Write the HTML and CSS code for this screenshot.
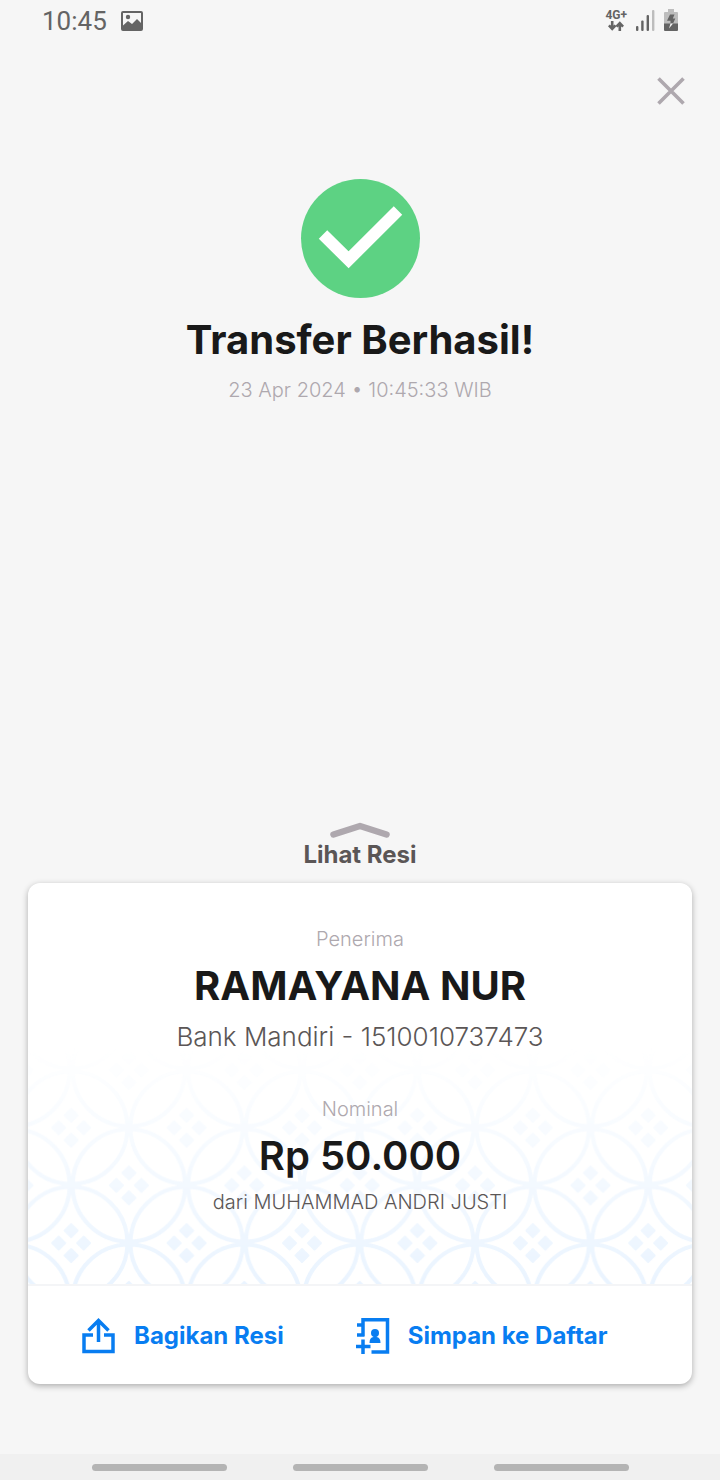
FILE: index.html
```html
<!DOCTYPE html>
<html lang="id">
<head>
<meta charset="utf-8">
<meta name="viewport" content="width=device-width, initial-scale=1">
<title>Transfer Berhasil</title>
<link rel="stylesheet" href="styles.css">
</head>
<body>
<div class="screen">
  <header class="status-bar">
    <div class="status-group">
      <span class="clock">10:45</span>
      <svg class="status-photo" viewBox="0 0 22 20" aria-hidden="true">
        <path fill="#646464" fill-rule="evenodd" d="M2 0H20Q22 0 22 2V18Q22 20 20 20H2Q0 20 0 18V2Q0 0 2 0ZM2 2V14.500L7 10L11 13L16 8L20 12V2Z"/>
        <circle cx="7" cy="6" r="2.200" fill="#646464"/>
      </svg>
    </div>
    <div class="status-group status-right">
      <div class="network">
        <span>4G+</span>
        <svg class="network-arrows" viewBox="0 0 16 10" aria-hidden="true">
          <path fill="none" stroke="#646464" stroke-width="2.600" d="M4.200 0V7.500M0.900 4.300L4.200 7.800L7.500 4.300M11.800 10V2.500M8.500 5.700L11.800 2.200L15.100 5.700"/>
        </svg>
      </div>
      <svg class="signal" viewBox="0 0 19 21" aria-hidden="true">
        <g fill="#646464"><rect y="16" width="2.400" height="5" rx="1"/><rect x="5.200" y="10.500" width="2.400" height="10.500" rx="1"/><rect x="10.600" y="5" width="2.400" height="16" rx="1"/></g>
        <rect x="16" width="2.400" height="21" rx="1" fill="#bdbdbd"/>
      </svg>
      <svg class="battery" viewBox="0 0 14 22" aria-hidden="true">
        <path fill="#bdbdbd" d="M4 0H10V3H13Q14 3 14 4V15H0V4Q0 3 1 3H4Z"/>
        <path fill="#646464" d="M0 14.500H14V21Q14 22 13 22H1Q0 22 0 21Z"/>
        <path fill="#646464" d="M6 5.500H10.500L8.800 9.500H11.300L9 14.500H6.500V11.800H3Z"/>
        <path fill="#f5f5f5" d="M6.500 14.500H9L5 19.500Z"/>
      </svg>
    </div>
  </header>

  <div class="toolbar">
    <button class="close" type="button" aria-label="Tutup">
      <svg class="close-icon" viewBox="0 0 28 28" aria-hidden="true"><path fill="none" stroke="#aea8ae" stroke-width="3.600" d="M1.500 1.500L26.500 26.500M26.500 1.500L1.500 26.500"/></svg>
    </button>
  </div>

  <main class="content">
    <section class="result">
      <svg class="result-icon" viewBox="0 0 119 119" aria-hidden="true">
        <circle cx="59.500" cy="59.500" r="59.500" fill="#5dd283"/>
        <path fill="none" stroke="#fff" stroke-width="12" d="M22 55.500L47.600 80.800L97 31.500"/>
      </svg>
      <h1 class="title">Transfer Berhasil!</h1>
      <p class="date">23 Apr 2024 • 10:45:33 WIB</p>
    </section>

    <button class="receipt-toggle" type="button">
      <svg class="chevron" viewBox="0 0 60 16" aria-hidden="true"><path fill="none" stroke="#aea8ae" stroke-width="6.500" stroke-linecap="round" stroke-linejoin="round" d="M3.500 12.500L30 4L56.500 12.500"/></svg>
      <span>Lihat Resi</span>
    </button>

    <section class="card">
      <div class="details">
        <svg class="pattern" aria-hidden="true">
          <defs>
            <pattern id="kawung" width="115.400" height="115.400" patternUnits="userSpaceOnUse" patternTransform="translate(-14.500 22)">
              <g fill="none" stroke="#eaf4ff" stroke-width="4.200">
                <circle cx="57.700" cy="57.700" r="56.200"/>
                <circle cx="0" cy="0" r="56.200"/><circle cx="115.400" cy="0" r="56.200"/>
                <circle cx="0" cy="115.400" r="56.200"/><circle cx="115.400" cy="115.400" r="56.200"/>
              </g>
              <g fill="#eaf4ff" stroke="#eaf4ff" stroke-width="2" stroke-linejoin="round">
                <path id="gem" d="M57.700 38.700l6.500 6.500l-6.500 6.500l-6.500 -6.500zM57.700 63.700l6.500 6.500l-6.500 6.500l-6.500 -6.500zM45.200 51.200l6.500 6.500l-6.500 6.500l-6.500 -6.500zM70.200 51.200l6.500 6.500l-6.500 6.500l-6.500 -6.500z"/>
                <use href="#gem" x="-57.700" y="-57.700"/><use href="#gem" x="57.700" y="-57.700"/>
                <use href="#gem" x="-57.700" y="57.700"/><use href="#gem" x="57.700" y="57.700"/>
              </g>
            </pattern>
          </defs>
          <rect width="100%" height="100%" fill="url(#kawung)"/>
        </svg>
        <div class="party">
          <p class="label">Penerima</p>
          <h2 class="value">RAMAYANA NUR</h2>
          <p class="account">Bank Mandiri - 1510010737473</p>
        </div>
        <div class="party">
          <p class="label">Nominal</p>
          <p class="value amount">Rp 50.000</p>
          <p class="source">dari MUHAMMAD ANDRI JUSTI</p>
        </div>
      </div>
      <div class="actions">
        <button class="action" type="button">
          <svg class="action-icon" viewBox="0 0 34 36" aria-hidden="true"><path fill="none" stroke="#087df1" stroke-width="3.500" d="M11 17H2V33.500H31V17H22M16.500 24V3M6.500 12.500L16.500 2.500L26.500 12.500"/></svg>
          <span>Bagikan Resi</span>
        </button>
        <button class="action" type="button">
          <svg class="action-icon" viewBox="0 0 34 36" aria-hidden="true">
            <path fill="none" stroke="#087df1" stroke-width="3.500" d="M7 18V1.700H31.500V34H15.500M1 7H8M1 17H8.500M0 28.500H14.500M7 21.500V36"/>
            <circle cx="19" cy="15" r="4" fill="#087df1"/>
            <path fill="#087df1" d="M13.500 25Q13.500 19.500 17.500 19V17H20.500V19Q24.500 19.500 24.500 25Z"/>
          </svg>
          <span>Simpan ke Daftar</span>
        </button>
      </div>
    </section>
  </main>

  <div class="gesture-bar"><span class="handle"></span><span class="handle"></span><span class="handle"></span></div>
</div>
</body>
</html>
```
FILE: styles.css
```css
* { box-sizing: border-box; }

body {
  margin: 0;
  background: #f6f6f6;
  color: #191919;
  font-family: Inter, "Liberation Sans", sans-serif;
}

h1, h2, p { margin: 0; }

button {
  border: 0;
  padding: 0;
  background: none;
  color: inherit;
  font: inherit;
  cursor: pointer;
}

svg { display: block; flex: none; }

.screen {
  display: flex;
  flex-direction: column;
  min-height: 100vh;
}

.status-bar {
  display: flex;
  justify-content: space-between;
  align-items: center;
  height: 42px;
  padding: 0 42px;
  color: #646464;
  font-family: Roboto, sans-serif;
}

.status-group { display: flex; align-items: center; gap: 14px; }
.status-right { gap: 9px; padding-bottom: 2px; }
.clock { font-size: 26px; line-height: 32px; }
.status-photo { width: 22px; height: 20px; }
.network {
  display: flex;
  flex-direction: column;
  align-items: center;
  font-size: 12px;
  font-weight: 700;
  line-height: 12px;
}
.network-arrows { width: 16px; height: 10px; }
.signal { width: 19px; height: 21px; }
.battery { width: 14px; height: 22px; }

.toolbar {
  display: flex;
  justify-content: flex-end;
  padding: 24px 24px 0;
}
.close { padding: 11px; }
.close-icon { width: 28px; height: 28px; }

.content {
  display: flex;
  flex: 1;
  flex-direction: column;
  padding: 63px 28px 70px;
}

.result {
  display: flex;
  flex: 1;
  flex-direction: column;
  align-items: center;
  text-align: center;
}
.result-icon { width: 119px; height: 119px; }
.title {
  margin-top: 18px;
  font-size: 40px;
  font-weight: 700;
  line-height: 48px;
}
.date {
  margin-top: 12px;
  color: #aea8ae;
  font-size: 20px;
  font-weight: 300;
  line-height: 28px;
}

.receipt-toggle {
  display: flex;
  flex-direction: column;
  align-items: center;
  align-self: center;
  gap: 1px;
  margin-bottom: 12px;
  color: #5b5656;
  font-size: 24px;
  font-weight: 700;
  line-height: 32px;
}
.chevron { width: 60px; height: 16px; }

.card {
  overflow: hidden;
  border-radius: 12px;
  background: #fff;
  box-shadow: 0 2px 6px rgba(0, 0, 0, 0.3);
}

.details {
  position: relative;
  display: flex;
  flex-direction: column;
  gap: 42px;
  padding: 42px 24px 68px;
  border-bottom: 2px solid #f4f5f7;
  text-align: center;
}
.pattern {
  position: absolute;
  inset: auto 0 0;
  width: 100%;
  height: 236px;
  mask-image: linear-gradient(transparent, #000);
}
.party { position: relative; }
.label {
  color: #aea8ae;
  font-size: 20px;
  font-weight: 300;
  line-height: 28px;
}
.value {
  margin-top: 9px;
  font-size: 40px;
  font-weight: 700;
  line-height: 48px;
}
.amount { font-weight: 600; }
.account {
  margin-top: 11px;
  color: #5b5656;
  font-size: 26px;
  font-weight: 300;
  line-height: 32px;
}
.source {
  margin-top: 8px;
  color: #5b5656;
  font-size: 20px;
  font-weight: 300;
  line-height: 28px;
}

.actions {
  display: flex;
  flex-wrap: wrap;
  gap: 16px 72px;
  padding: 32px 24px 30px 54px;
}
.action {
  display: flex;
  align-items: center;
  gap: 18px;
  color: #087df1;
  font-size: 24px;
  font-weight: 700;
  line-height: 32px;
}
.action-icon { width: 34px; height: 36px; }

.gesture-bar {
  display: flex;
  justify-content: center;
  align-items: center;
  gap: 66px;
  height: 26px;
  background: #f0f0f0;
}
.handle {
  width: 135px;
  height: 7px;
  border-radius: 4px;
  background: #b4b4b4;
}
```
